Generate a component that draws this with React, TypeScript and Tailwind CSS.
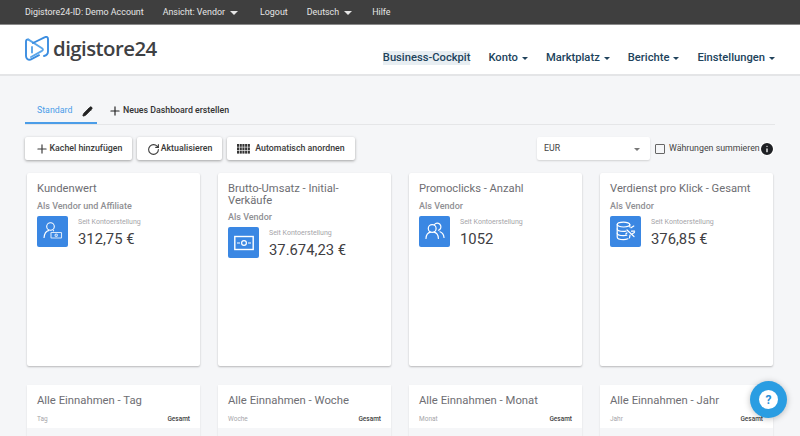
import React from 'react';
import { Plus, RotateCw, Pencil, Info } from 'lucide-react';

const topLinks = [
  { label: 'Digistore24-ID: Demo Account', cls: '' },
  { label: 'Ansicht: Vendor', cls: 'ml-[19px]', caret: true },
  { label: 'Logout', cls: 'ml-[22px]' },
  { label: 'Deutsch', cls: 'ml-[19px]', caret: true },
  { label: 'Hilfe', cls: 'ml-[20px]' },
];

const navLinks = ['Konto', 'Marktplatz', 'Berichte', 'Einstellungen'];

const Logo = () => (
  <div className="flex items-center">
    <svg width="24" height="25" viewBox="0 0 24 25" fill="none" stroke="#3b8de0" strokeWidth="1.9" strokeLinejoin="round" strokeLinecap="round">
      <path d="M3.5 3.6 C2 3.2 1 4 1 5.5 V20 C1 22.5 3 24.2 5.5 23.6 L14 19.2" />
      <path d="M3.5 3.6 L17 12.2 C18.2 13 18.2 14 17 14.8 L6 21" stroke="#5aa6ea" />
      <path d="M19 20 C21.5 19.4 23 18 23 15.5 V3 C23 1 21.5 0.4 20 1.2 L8 7" />
      <path d="M7 11 V16.5" stroke="#5aa6ea" />
    </svg>
    <span className="ml-[4px] font-['Open_Sans',sans-serif] text-[20.4px] font-semibold leading-none tracking-[-0.55px] text-[#3f4144]">digistore24</span>
  </div>
);

const UserMoneyIcon = () => (
  <svg width="20" height="20" viewBox="0 0 20 20" fill="none" stroke="#fff" strokeWidth="1.1">
    <circle cx="7.5" cy="5.5" r="3.8" />
    <path d="M1 17 C1.3 12.5 3.5 10 6 9.4 M10 9.6 L11 10" />
    <rect x="8" y="11.5" width="10.5" height="5.5" rx="0.5" strokeOpacity="0.8" />
    <circle cx="13.2" cy="14.2" r="1.2" strokeOpacity="0.8" />
  </svg>
);

const BillIcon = () => (
  <svg width="20" height="20" viewBox="0 0 20 20" fill="none" stroke="#fff" strokeWidth="1.2">
    <rect x="0.8" y="3.5" width="18.4" height="13" strokeWidth="1.4" />
    <circle cx="10" cy="10" r="2.4" />
    <path d="M3 10 H6 M14 10 H17" />
  </svg>
);

const UsersIcon = () => (
  <svg width="20" height="20" viewBox="0 0 20 20" fill="none" stroke="#fff" strokeWidth="1.2" strokeLinecap="round">
    <circle cx="7.2" cy="7.5" r="3.9" />
    <path d="M1 17.5 C1.2 13.5 3.5 11.6 5.5 11.2 M9 11.2 C11 11.6 13.2 13.5 13.4 17.5" />
    <path d="M9.5 3.5 C10.5 2.2 12.2 1.8 13.6 2.4 C15.6 3.2 16.4 5.4 15.6 7.2 C15.2 8.2 14.5 8.8 13.5 9.2" />
    <path d="M15 10.8 C17 11.6 18.7 13.4 19 16.5" />
  </svg>
);

const DatabaseIcon = () => (
  <svg width="20" height="20" viewBox="0 0 20 20" fill="none" stroke="#fff" strokeWidth="1.2" strokeLinecap="round">
    <ellipse cx="7.5" cy="3.6" rx="6.3" ry="2.4" />
    <path d="M1.2 3.6 V16 C1.2 17.6 4 18.6 7.5 18.6 C9.5 18.6 11 18.2 12 17.8" />
    <path d="M1.2 7.8 C1.2 9.4 4 10.4 7.5 10.4 C8.5 10.4 9.3 10.3 10 10.2" />
    <path d="M1.2 12 C1.2 13.6 4 14.6 7.5 14.6 C8.8 14.6 9.8 14.5 10.8 14.2" />
    <path d="M13.8 3.5 V6 M11 9 L18 15.5 M15 6.8 L17.8 5 M15.5 10.2 H18.6 M11 11.8 L9.8 13 M14 14.2 L13.5 16.8 M16 13 L18.4 11.5" />
  </svg>
);

const kpis = [
  { title: 'Kundenwert', sub: 'Als Vendor und Affiliate', value: '312,75 €', icon: <UserMoneyIcon /> },
  { title: 'Brutto-Umsatz - Initial-Verkäufe', sub: 'Als Vendor', value: '37.674,23 €', icon: <BillIcon /> },
  { title: 'Promoclicks - Anzahl', sub: 'Als Vendor', value: '1052', icon: <UsersIcon /> },
  { title: 'Verdienst pro Klick - Gesamt', sub: 'Als Vendor', value: '376,85 €', icon: <DatabaseIcon /> },
];

const earnings = [
  { title: 'Alle Einnahmen - Tag', col: 'Tag' },
  { title: 'Alle Einnahmen - Woche', col: 'Woche' },
  { title: 'Alle Einnahmen - Monat', col: 'Monat' },
  { title: 'Alle Einnahmen - Jahr', col: 'Jahr' },
];

const ToolButton = ({ icon, label, cls }: { icon: React.ReactNode; label: string; cls: string }) => (
  <button className={`flex h-[23px] items-center justify-center rounded-[2px] bg-white pt-px text-[8.8px] font-medium text-[#3a3a3a] shadow-[0_1px_3px_rgba(0,0,0,0.35)] ${cls}`}>
    {icon}
    {label}
  </button>
);

const GridIcon = () => (
  <svg width="13" height="10" viewBox="0 0 13 10" fill="#333" className="mr-[5px]">
    {[0, 3.4, 6.8].map((y) =>
      [0, 2.7, 5.4, 8.1, 10.8].map((x) => <rect key={`${x}-${y}`} x={x} y={y} width="2.1" height="2.8" />),
    )}
  </svg>
);

const Caret = ({ cls }: { cls: string }) => (
  <span className={`inline-block h-0 w-0 border-x-[3px] border-t-[3px] border-x-transparent ${cls}`} />
);

export default function App() {
  return (
    <div className="relative h-[436px] w-[800px] overflow-hidden bg-[#f5f6f8] font-['Roboto',sans-serif]">
      <div className="flex h-[25px] items-center border-b border-[#8a8a8a] bg-[#3f3f3f] pl-[25px] pt-[2px] text-[8.9px] text-[#e6e6e6]">
        {topLinks.map((l) => (
          <span key={l.label} className={`flex items-center whitespace-nowrap ${l.cls}`}>
            {l.label}
            {l.caret && <Caret cls="ml-[5px] border-x-[4px] border-t-[4px] border-t-[#e6e6e6]" />}
          </span>
        ))}
      </div>

      <header className="flex h-[51px] items-start justify-between border-b-2 border-[#e4e5e7] bg-white pl-[25px] pr-[25px]">
        <div className="pt-[11px]">
          <Logo />
        </div>
        <nav className="flex items-center gap-[18px] pt-[25px] text-[11.2px] font-medium text-[#21435c]">
          <span className="bg-[#e8eef2] leading-[14px]">Business-Cockpit</span>
          {navLinks.map((n) => (
            <span key={n} className="flex items-center gap-[4px]">
              {n}
              <Caret cls="border-t-[#21435c]" />
            </span>
          ))}
        </nav>
      </header>

      <main className="px-[25px]">
        <div className="mt-[23px] flex h-[26px] items-stretch border-b border-[#e5e6e8]">
          <div className="flex w-[72px] items-center border-b-2 border-[#4b9de8] pl-[12px] pt-px text-[8.8px] text-[#4b9de8]">
            Standard
            <Pencil size={11} fill="#222" stroke="#222" className="ml-[10px]" />
          </div>
          <div className="ml-[11px] flex items-center pb-px text-[8.8px] font-medium text-[#333]">
            <Plus size={14} strokeWidth={2} className="mr-[1px] text-[#222]" />
            Neues Dashboard erstellen
          </div>
        </div>

        <div className="mt-[12px] flex items-center">
          <div className="flex shrink-0 gap-[5px]">
            <ToolButton cls="w-[107px]" label="Kachel hinzufügen" icon={<Plus size={14} strokeWidth={2} className="mr-[1px]" />} />
            <ToolButton cls="w-[85px]" label="Aktualisieren" icon={<RotateCw size={13} strokeWidth={2} className="mr-[1px]" />} />
            <ToolButton cls="w-[128px]" label="Automatisch anordnen" icon={<GridIcon />} />
          </div>
          <div className="ml-[182px] flex h-[23px] w-[113px] shrink-0 items-center justify-between rounded-[2px] bg-white pl-[7px] pr-[10px] pt-px text-[8.8px] text-[#444] shadow-[0_1px_2px_rgba(0,0,0,0.15)]">
            EUR
            <Caret cls="border-x-[3.5px] border-t-[3.5px] border-t-[#777]" />
          </div>
          <span className="ml-[5px] h-[10px] w-[10px] shrink-0 rounded-[1px] border border-[#666]" />
          <span className="ml-[4px] whitespace-nowrap pt-px text-[8.8px] text-[#444]">Währungen summieren</span>
          <Info size={16} fill="#1e2024" stroke="#fff" strokeWidth={2} className="-ml-px shrink-0" />
        </div>

        <div className="mt-[13px] ml-[2px] grid w-[746px] grid-cols-4 gap-x-[18px] gap-y-[19px]">
          {kpis.map((k) => (
            <section key={k.title} className="h-[193px] rounded-[2px] bg-white px-[10px] pt-[10px] shadow-[0_1px_2px_rgba(0,0,0,0.25)]">
              <h2 className="text-[11.2px] leading-[11.5px] text-[#6e6e73]">{k.title}</h2>
              <p className="mt-[6px] text-[9px] font-medium leading-[11px] text-[#8f8f93]">{k.sub}</p>
              <div className="mt-[4px] flex">
                <div className="flex h-[31px] w-[31px] items-center justify-center rounded-[2px] bg-[#3a87e3]">{k.icon}</div>
                <div className="ml-[10px]">
                  <p className="mt-[2px] text-[7px] leading-[9px] text-[#a5a5a9]">Seit Kontoerstellung</p>
                  <p className="mt-[3px] text-[14.8px] leading-[18px] text-[#3f4043]">{k.value}</p>
                </div>
              </div>
            </section>
          ))}
          {earnings.map((e) => (
            <section key={e.title} className="h-[70px] bg-[#f5f6f8] shadow-[0_1px_2px_rgba(0,0,0,0.1)]">
              <div className="h-[43px] bg-white px-[10px] pt-[9px]">
                <h2 className="text-[11.3px] leading-[14px] text-[#6e6e73]">{e.title}</h2>
                <div className="mt-[7px] flex items-center justify-between text-[6.5px] leading-[9px]">
                  <span className="text-[#a5a5a9]">{e.col}</span>
                  <span className="font-medium text-[#444]">Gesamt</span>
                </div>
              </div>
            </section>
          ))}
        </div>
      </main>

      <button className="absolute left-[750px] top-[381px] flex h-[37px] w-[37px] items-center justify-center rounded-full bg-[#2a9de2] shadow-[0_1px_6px_rgba(0,0,0,0.25)]">
        <span className="flex h-[19px] w-[19px] items-center justify-center rounded-full bg-white text-[12px] font-bold leading-none text-[#2a8fd8]">?</span>
      </button>
    </div>
  );
}
